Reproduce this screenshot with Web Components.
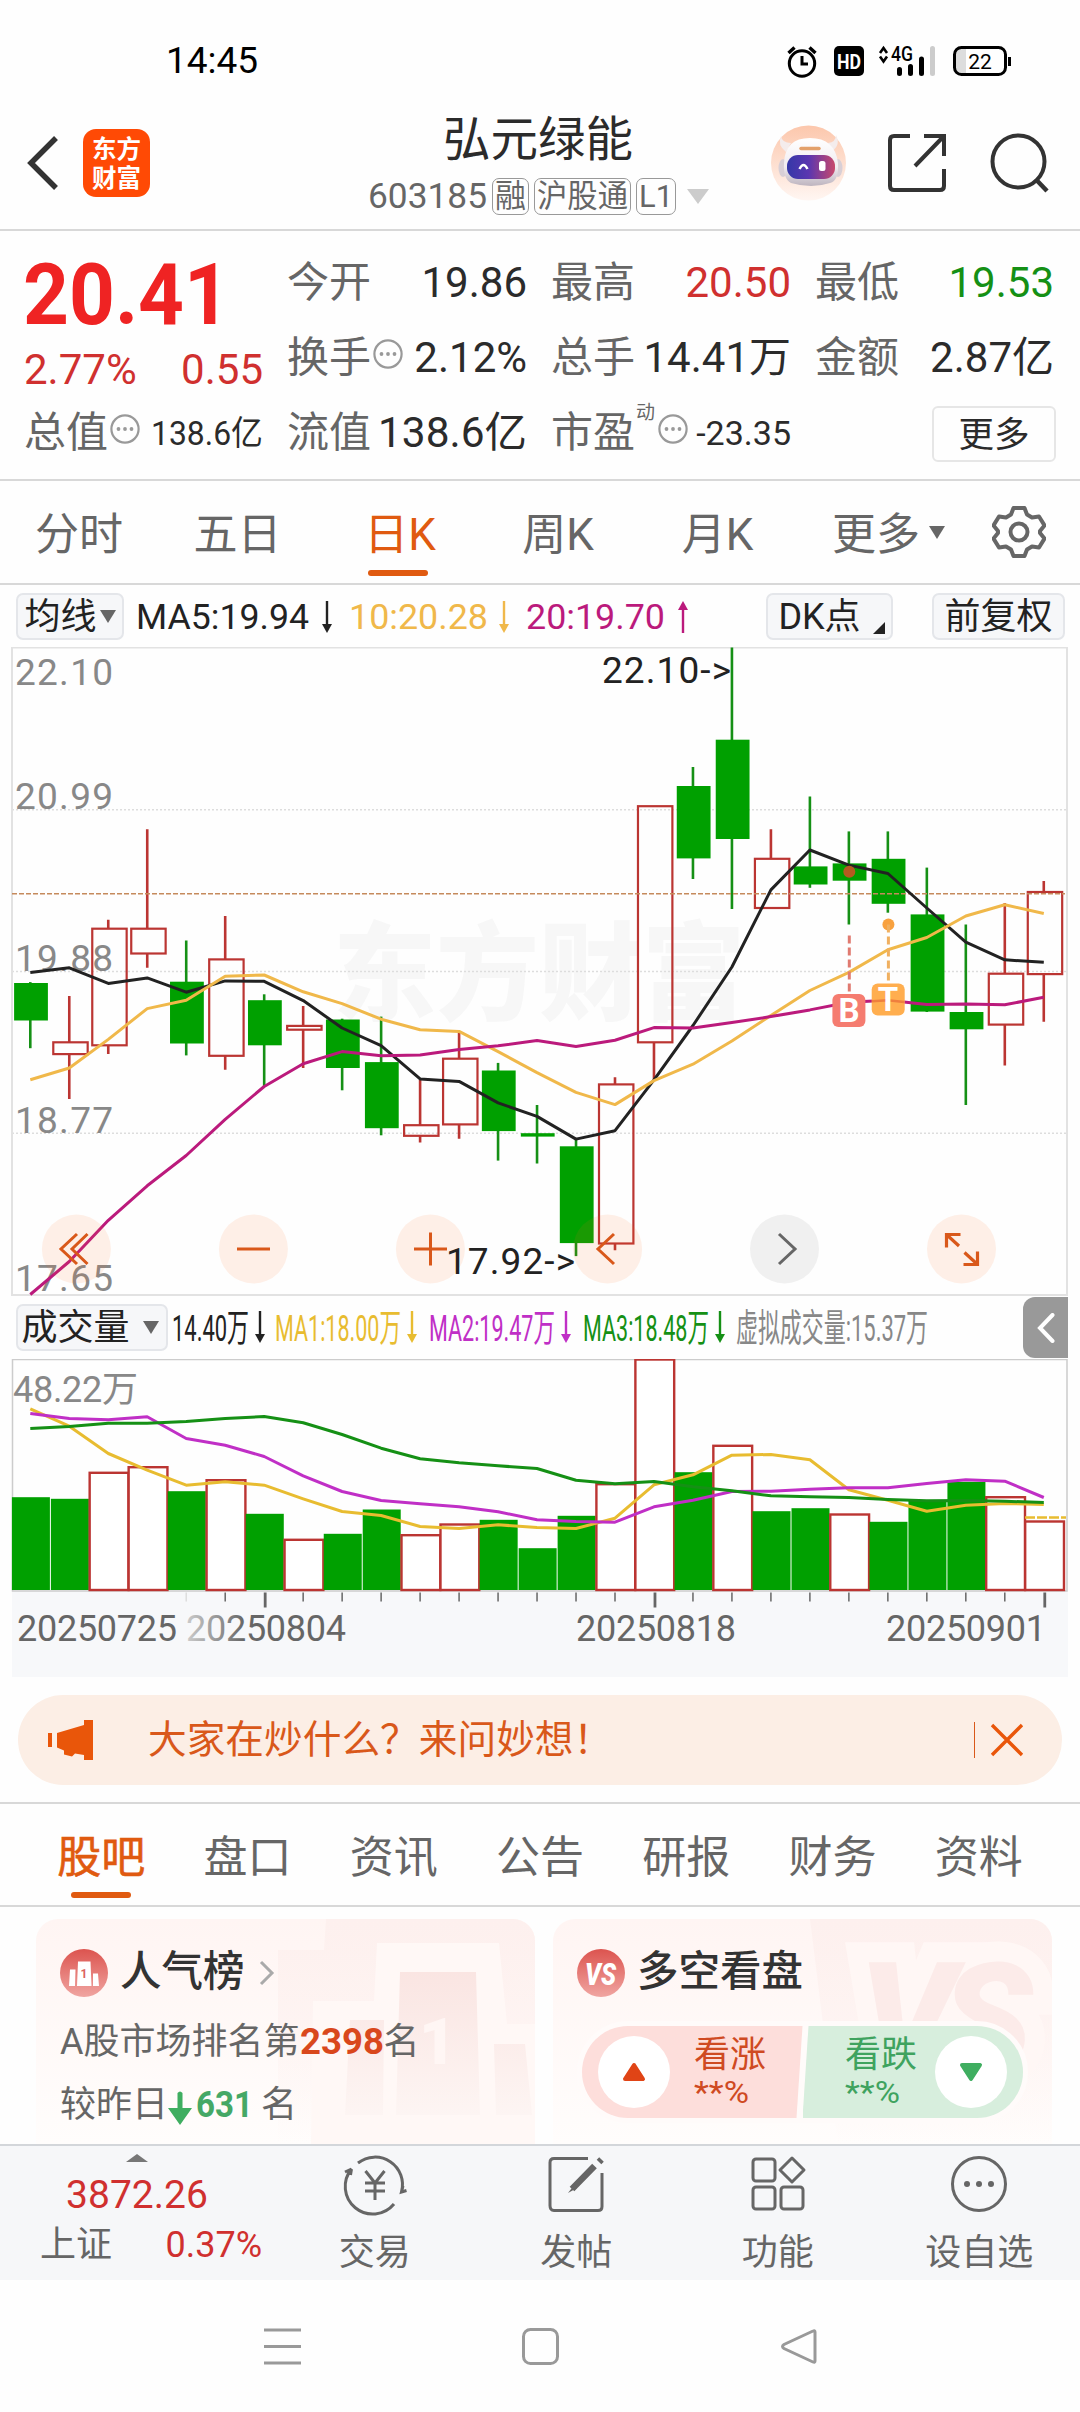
<!DOCTYPE html>
<html lang="zh-CN">
<head>
<meta charset="utf-8">
<title>弘元绿能 603185</title>
<style>
    body {
        margin: 0;
        width: 1080px;
        height: 2412px;
        overflow: hidden;
        background: #fefefe;
        color: #2b2b2b;
        font-family: Roboto, "Noto Sans CJK SC", sans-serif;
        --red: #d0302f;
        --green: #159015;
        --orange: #e05a10;
        --grey: #666;
        --line: #d8d8d8;
    }
</style>
</head>
<body>
<stock-page></stock-page>

<script>
// squeezes or stretches its text to the width given in "w"
class FitText extends HTMLElement {
    constructor() {
        super();
        this.attachShadow({mode: 'open'});
        this.shadowRoot.innerHTML = `
        <style>
            :host { display: inline-block; white-space: nowrap; flex: none; }
            span { display: inline-block; transform-origin: 0 50%; }
        </style>
        <span><slot></slot></span>`;
    }

    connectedCallback() {
        const w = Number(this.getAttribute('w'));
        const span = this.shadowRoot.querySelector('span');
        const natural = span.getBoundingClientRect().width;
        this.style.width = w + 'px';
        if (natural) span.style.transform = `scaleX(${w / natural})`;
    }
}
customElements.define('fit-text', FitText);

class TrendArrow extends HTMLElement {
    constructor() {
        super();
        this.attachShadow({mode: 'open'});
    }

    connectedCallback() {
        const up = this.hasAttribute('up');
        this.shadowRoot.innerHTML = `
        <style>
            :host { display: block; flex: none; width: 12px; height: 34px; }
            svg { display: block; ${up ? 'transform: rotate(180deg);' : ''} }
        </style>
        <svg width="12" height="34" viewBox="0 0 12 34">
            <path d="M6 1v28" stroke="currentColor" stroke-width="2.4"/>
            <path d="M1 24h10l-5 9z" fill="currentColor"/>
        </svg>`;
    }
}
customElements.define('trend-arrow', TrendArrow);

class StatusBar extends HTMLElement {
    constructor() {
        super();
        this.attachShadow({mode: 'open'});
    }

    connectedCallback() {
        this.shadowRoot.innerHTML = `
        <style>
            :host {
                display: flex;
                align-items: flex-start;
                height: 80px;
                padding: 0 68px 0 166px;
                box-sizing: border-box;
                color: #000;
            }
            .time { font-size: 37px; line-height: 40px; margin-top: 41px; flex: 1; }
            svg { display: block; margin-top: 42px; }
        </style>
        <div class="time">14:45</div>
        <svg width="226" height="38" viewBox="786 42 226 38">
            <g fill="none" stroke="#000" stroke-width="3">
                <circle cx="802" cy="63.500" r="12.700"/>
                <path d="M802 56v8h6"/>
                <path d="M788.500 53l6-5.500M815.500 53l-6-5.500" stroke-width="3.400"/>
            </g>
            <rect x="834" y="46" width="30" height="30" rx="5"/>
            <text x="849" y="68.500" font-size="21" font-weight="700" fill="#fff" text-anchor="middle" textLength="24" lengthAdjust="spacingAndGlyphs">HD</text>
            <path d="M880 53l3.500-5 3.500 5M880 56.500l3.500 5 3.500-5" fill="none" stroke="#000" stroke-width="2.600"/>
            <text x="891" y="61" font-size="20" font-weight="500" textLength="22" lengthAdjust="spacingAndGlyphs">4G</text>
            <path d="M899.500 69.500v4M910.500 66.500v7M921.500 59v14.500" stroke="#000" stroke-width="5" stroke-linecap="round"/>
            <path d="M932.500 48.500v25" stroke="#ccc" stroke-width="5" stroke-linecap="round"/>
            <rect x="956" y="49" width="10" height="25" fill="#ddd"/>
            <rect x="954.500" y="47.500" width="51" height="27" rx="7" fill="none" stroke="#000" stroke-width="3"/>
            <path d="M1009.500 57v9" stroke="#000" stroke-width="3"/>
            <text x="980" y="68.500" font-size="21" text-anchor="middle">22</text>
        </svg>`;
    }
}
customElements.define('status-bar', StatusBar);

class StockHeader extends HTMLElement {
    constructor() {
        super();
        this.attachShadow({mode: 'open'});
    }

    connectedCallback() {
        this.shadowRoot.innerHTML = `
        <style>
            :host {
                display: flex;
                align-items: center;
                height: 151px;
                box-sizing: border-box;
                padding: 16px 30px 0 27px;
                border-bottom: 2px solid var(--line);
            }
            svg { display: block; flex: none; }
            .logo {
                width: 67px;
                height: 68px;
                margin-left: 25px;
                border-radius: 13px;
                background: #ff4a05;
                color: #fff;
                font: 700 24.500px/29px "Noto Sans CJK SC", sans-serif;
                text-align: center;
                padding-top: 4px;
                box-sizing: border-box;
            }
            .name {
                display: flex;
                flex-direction: column;
                align-items: center;
                width: 344px;
                margin: 0 61px 0 216px;
            }
            .title { font-size: 47.500px; line-height: 60px; }
            .code {
                display: flex;
                align-items: center;
                gap: 5px;
                margin-top: 8px;
                font-size: 35px;
                line-height: 38px;
                color: var(--grey);
            }
            .tag {
                height: 37px;
                line-height: 36px;
                font-size: 31.500px;
                padding: 0 2px;
                border: 1.5px solid #999;
                border-radius: 7px;
                box-sizing: border-box;
                display: flex;
                align-items: center;
            }
        </style>
        <svg width="31" height="54" viewBox="0 0 31 54"><path d="M29 2L4 27l25 25" fill="none" stroke="#333" stroke-width="5.500"/></svg>
        <div class="logo">东方<br>财富</div>
        <div class="name">
            <div class="title">弘元绿能</div>
            <div class="code">
                <fit-text w="119">603185</fit-text>
                <span class="tag"><fit-text w="31">融</fit-text></span>
                <span class="tag"><fit-text w="91">沪股通</fit-text></span>
                <span class="tag"><fit-text w="34">L1</fit-text></span>
                <svg width="22" height="15" viewBox="0 0 22 15" style="margin-left:6px"><path d="M0 0h22L11 15z" fill="#ccc"/></svg>
            </div>
        </div>
        <svg width="75" height="76" viewBox="0 0 75 76">
            <defs>
                <linearGradient id="halo" x1="0" y1="0" x2="0" y2="1"><stop offset="0" stop-color="#fcc7ac"/><stop offset="1" stop-color="#fff6f2"/></linearGradient>
                <linearGradient id="visor"><stop offset="0" stop-color="#3538a8"/><stop offset=".45" stop-color="#5a36b0"/><stop offset="1" stop-color="#c8486c"/></linearGradient>
                <linearGradient id="shell" x1="0" y1="0" x2="0" y2="1"><stop offset="0" stop-color="#fff"/><stop offset=".6" stop-color="#f1ecf0"/><stop offset="1" stop-color="#bdb4bf"/></linearGradient>
            </defs>
            <circle cx="37.500" cy="38" r="37.500" fill="url(#halo)"/>
            <path d="M20 18q-9 0-10-7-4 9 5 16zM57 18q8-1 8-8 5 10-4 16z" fill="#f4ecec"/>
            <ellipse cx="12" cy="43" rx="4.500" ry="9" fill="#d8cfd6"/>
            <ellipse cx="67" cy="43" rx="4.500" ry="9" fill="#d8cfd6"/>
            <path d="M13 38Q14 13 39 13 64 13 67 38 68 56 59 58 50 61 40 61 30 61 20 58 12 54 13 38z" fill="url(#shell)"/>
            <rect x="16" y="30" width="48" height="24" rx="11" fill="url(#visor)"/>
            <path d="M30 23.500h18" stroke="#e3a06a" stroke-width="3.500" stroke-linecap="round"/>
            <path d="M28.500 44q4-8 8 0" fill="none" stroke="#fff" stroke-width="2.500"/>
            <rect x="48" y="36" width="6.500" height="10" rx="2.500" fill="#fff"/>
        </svg>
        <svg width="58" height="60" viewBox="0 0 58 60" style="margin-left:42px">
            <path d="M22 3H6q-4 0-4 4v46q0 4 4 4h46q4 0 4-4V36M36 3h20v20M56 3L27 33" fill="none" stroke="#333" stroke-width="4"/>
        </svg>
        <svg width="60" height="60" viewBox="0 0 60 60" style="margin-left:44px">
            <circle cx="28.500" cy="28.500" r="26" fill="none" stroke="#333" stroke-width="4"/>
            <path d="M45.500 46l11.500 12" stroke="#333" stroke-width="4.500"/>
        </svg>`;
    }
}
customElements.define('stock-header', StockHeader);

class QuoteItem extends HTMLElement {
    constructor() {
        super();
        this.attachShadow({mode: 'open'});
    }

    connectedCallback() {
        const info = this.hasAttribute('info') ? `
            <svg width="30" height="30" viewBox="0 0 30 30">
                <circle cx="15" cy="15" r="13.600" fill="none" stroke="#999" stroke-width="2.200"/>
                <g fill="#999"><circle cx="8.500" cy="15" r="1.900"/><circle cx="15" cy="15" r="1.900"/><circle cx="21.500" cy="15" r="1.900"/></g>
            </svg>` : '';
        const sup = this.hasAttribute('sup') ? `<sup>${this.getAttribute('sup')}</sup>` : '';
        this.shadowRoot.innerHTML = `
        <style>
            :host {
                display: flex;
                align-items: center;
                height: 75px;
                font-size: 42px;
                line-height: 60px;
                white-space: nowrap;
            }
            .label { color: var(--grey); }
            sup { font-size: 19px; line-height: 20px; color: var(--grey); margin: -39px 1px 0 1px; }
            svg { margin: -8px 0 0 2px; }
            .value { margin-left: auto; }
            :host([small]) .value { font-size: 34px; }
        </style>
        <span class="label">${this.getAttribute('label')}</span>${sup}${info}
        <span class="value"><slot></slot></span>`;
    }
}
customElements.define('quote-item', QuoteItem);

class QuotePanel extends HTMLElement {
    constructor() {
        super();
        this.attachShadow({mode: 'open'});
    }

    connectedCallback() {
        this.shadowRoot.innerHTML = `
        <style>
            :host {
                display: grid;
                grid-template-columns: 239px 240px 240px 239px;
                grid-template-rows: 75px 75px 75px;
                column-gap: 24px;
                height: 250px;
                box-sizing: border-box;
                padding: 14px 25px 0 24px;
                border-bottom: 2px solid var(--line);
            }
            .price { grid-row: span 2; color: var(--red); }
            .last { font-size: 86px; line-height: 75px; font-weight: 700; color: #ef2323; margin: 12px 0 0 -1px; }
            .change { display: flex; justify-content: space-between; font-size: 42px; line-height: 75px; }
            .more {
                justify-self: end;
                margin: 11px -2px 0 0;
                width: 124px;
                height: 56px;
                line-height: 54px;
                box-sizing: border-box;
                border: 2px solid #e6e6e6;
                border-radius: 6px;
                font-size: 35.500px;
                text-align: center;
            }
        </style>
        <div class="price">
            <div class="last"><fit-text w="207">20.41</fit-text></div>
            <div class="change"><span>2.77%</span><span>0.55</span></div>
        </div>
        <quote-item label="今开">19.86</quote-item>
        <quote-item label="最高"><span style="color:var(--red)">20.50</span></quote-item>
        <quote-item label="最低"><span style="color:var(--green)">19.53</span></quote-item>
        <quote-item label="换手" info>2.12%</quote-item>
        <quote-item label="总手">14.41万</quote-item>
        <quote-item label="金额">2.87亿</quote-item>
        <quote-item label="总值" info small><fit-text w="112">138.6亿</fit-text></quote-item>
        <quote-item label="流值"><fit-text w="149">138.6亿</fit-text></quote-item>
        <quote-item label="市盈" sup="动" info small>-23.35</quote-item>
        <div class="more">更多</div>`;
    }
}
customElements.define('quote-panel', QuotePanel);

class PeriodTabs extends HTMLElement {
    constructor() {
        super();
        this.attachShadow({mode: 'open'});
    }

    connectedCallback() {
        this.shadowRoot.innerHTML = `
        <style>
            :host {
                display: grid;
                grid-template-columns: 158px 159px 166px 150px 169px 156px 122px;
                height: 104px;
                box-sizing: border-box;
                border-bottom: 2px solid var(--line);
                font-size: 44px;
                line-height: 108px;
                color: var(--grey);
                text-align: center;
            }
            .on { color: var(--orange); display: flex; flex-direction: column; align-items: center; }
            .on::after { content: ""; width: 60px; height: 6px; border-radius: 3px; background: var(--orange); margin: -19px 4px 0 0; }
            .more { display: flex; align-items: center; justify-content: flex-end; gap: 9px; padding-right: 13px; }
            .gear { display: flex; align-items: center; justify-content: center; height: 102px; }
        </style>
        <span>分时</span><span>五日</span><span class="on">日K</span><span>周K</span><span>月K</span>
        <span class="more">更多<svg width="16" height="13" viewBox="0 0 16 13" style="margin-bottom:6px"><path d="M0 0h16L8 13z" fill="#666"/></svg></span>
        <span class="gear">
            <svg width="54" height="54" viewBox="-27 -27 54 54" fill="none" stroke="#666" stroke-width="4" stroke-linejoin="round">
                <path d="M-5.500-24h11l2.500 6.500 5 3 7-1 5.500 9-4.500 5.500v2l4.500 5.500-5.500 9-7-1-5 3-2.500 6.500h-11l-2.500-6.500-5-3-7 1-5.500-9 4.500-5.500v-2l-4.500-5.500 5.500-9 7 1 5-3z"/>
                <circle r="8.500"/>
            </svg>
        </span>`;
    }
}
customElements.define('period-tabs', PeriodTabs);

// grey rounded button used above both charts
class ChipButton extends HTMLElement {
    constructor() {
        super();
        this.attachShadow({mode: 'open'});
        this.shadowRoot.innerHTML = `
        <style>
            :host {
                display: flex;
                align-items: center;
                justify-content: center;
                flex: none;
                height: 47px;
                box-sizing: border-box;
                border: 2px solid #e4e6ea;
                border-radius: 7px;
                background: #f6f7f9;
                color: #222;
                font-size: 36px;
                line-height: 44px;
                white-space: nowrap;
            }
        </style>
        <slot></slot>`;
    }
}
customElements.define('chip-button', ChipButton);

class MaBar extends HTMLElement {
    constructor() {
        super();
        this.attachShadow({mode: 'open'});
    }

    connectedCallback() {
        this.shadowRoot.innerHTML = `
        <style>
            :host {
                display: flex;
                align-items: center;
                height: 62px;
                padding: 1px 15px 0 16px;
                box-sizing: border-box;
                font-size: 35.500px;
                line-height: 46px;
                color: #222;
            }
            fit-text { margin-top: 1px; }
            trend-arrow { margin-left: 12px; }
        </style>
        <chip-button style="width:108px">均线<svg width="16" height="13" viewBox="0 0 16 13" style="margin-left:3px"><path d="M0 0h16L8 13z" fill="#666"/></svg></chip-button>
        <fit-text w="173" style="margin-left:12px">MA5:19.94</fit-text><trend-arrow></trend-arrow>
        <fit-text w="139" style="color:#f0b84a;margin-left:16px">10:20.28</fit-text><trend-arrow style="color:#f0b84a;margin-left:10px"></trend-arrow>
        <fit-text w="139" style="color:#bb1a7c;margin-left:16px">20:19.70</fit-text><trend-arrow up style="color:#bb1a7c;margin-left:12px"></trend-arrow>
        <chip-button style="width:127px;margin-left:auto">DK点<svg width="12" height="12" viewBox="0 0 12 12" style="margin:22px -4px 0 12px"><path d="M12 0v12H0z" fill="#222"/></svg></chip-button>
        <chip-button style="width:133px;margin-left:39px">前复权</chip-button>`;
    }
}
customElements.define('ma-bar', MaBar);

const STEP = 38.98;
const centre = i => 30.3 + STEP * i;
const line = (ys, color) => `<polyline points="${ys.map((y, i) => centre(i).toFixed(1) + ',' + y).join(' ')}" fill="none" stroke="${color}" stroke-width="3" stroke-linejoin="round"/>`;

// [up, high, body top, body bottom, low]
const candles = [
    [0, 334.6, 335.5, 373, 400.7], [1, 348.5, 394.8, 406.6, 451.6], [1, 272.3, 281.2, 397.8, 406.6],
    [1, 181.8, 281.2, 306, 320.3], [0, 293, 334.2, 396, 407.9], [1, 268.5, 311.9, 408.3, 422.2],
    [0, 346.8, 352.7, 397.8, 439], [1, 358.6, 378.4, 382.2, 420.5], [0, 371.2, 372, 420.5, 442.8],
    [0, 369.1, 414.6, 480.7, 487.8], [1, 432.3, 477.7, 488.3, 495], [1, 385.5, 411.2, 476.9, 491.2],
    [0, 415.4, 423, 483.6, 513.1], [0, 457.5, 485.7, 489.1, 516], [0, 492, 498.8, 595.6, 608.6],
    [1, 429.7, 436.9, 596, 602.7], [1, 158.7, 158.7, 394.8, 432.3], [0, 119.5, 138.5, 210.9, 231.5],
    [0, 0, 92.2, 191.5, 261.4], [1, 181.8, 211.3, 260.5, 261.4], [0, 149, 218.9, 237, 240.3],
    [0, 183.9, 215.9, 233.2, 277], [0, 183.9, 211.3, 256.3, 265.2], [0, 220.1, 266.9, 364.1, 364.5],
    [0, 277, 364.5, 381.8, 457.5], [1, 255.5, 326.2, 377.1, 418], [1, 233.6, 244.5, 326.6, 374.2]
];
const ma5 = [324.9, 320.3, 335.9, 330.4, 344.7, 333.4, 333.8, 353.1, 380.5, 398.2, 431.4, 433.9, 455.4, 468.9, 491.6, 483.2, 432.3, 378, 319.5, 242.4, 202.5, 217.6, 226, 260.5, 294.6, 312.3, 314.8];
const ma10 = [432.3, 420.5, 391.9, 361.1, 352.7, 328.7, 327.5, 344.3, 356.1, 371.7, 382.2, 383.9, 404.1, 425.1, 444.9, 457.1, 433.1, 416.7, 393.5, 367.9, 343, 324.9, 302.2, 290, 268.5, 257.2, 266];
const ma20 = [647, 614, 572.8, 538.3, 508, 471.8, 439, 416.3, 404.1, 408.3, 407.4, 402, 398.2, 393.1, 399, 392.7, 380.1, 380.5, 375, 369.1, 362.4, 354.8, 352.7, 356.9, 356.5, 357.3, 349.8];

class KChart extends HTMLElement {
    constructor() {
        super();
        this.attachShadow({mode: 'open'});
    }

    candle([up, high, top, bottom, low], i) {
        const x = centre(i);
        if (!up) {
            return `<path d="M${x} ${high}V${low}" stroke="#159015" stroke-width="2.600"/>
                <rect x="${x - 16.2}" y="${top}" width="33.800" height="${bottom - top}" fill="#00a000"/>`;
        }
        return `<path d="M${x} ${high}V${top}M${x} ${bottom}V${low}" stroke="#bb3532" stroke-width="2.600"/>
            <rect x="${x - 16}" y="${top}" width="34.400" height="${bottom - top}" fill="none" stroke="#bb3532" stroke-width="2.200"/>`;
    }

    render() {
        const labels = [['22.10', 37.5], ['20.99', 161.5], ['19.88', 323.7], ['18.77', 485.7], ['17.65', 643]];
        const buttons = [76.4, 253.4, 430.4, 607.6, 784.5, 961.5];
        return `
        <svg width="1080" height="649" viewBox="0 -.500 1080 649">
            <text x="333" y="364" font-family="Noto Sans CJK SC" font-weight="900" font-size="107" fill="#f7f7f7" textLength="412" lengthAdjust="spacingAndGlyphs">东方财富</text>
            <path d="M12 162.200H1067M12 324H1067M12 485.800H1067" stroke="#ddd" stroke-width="1.500" stroke-dasharray="2 2"/>
            <path d="M12 0H1067V647.500H12z" fill="none" stroke="#e2e2e2" stroke-width="2"/>
            <g font-size="37" fill="#888">${labels.map(([t, y]) => `<text x="15" y="${y}" textLength="98">${t}</text>`).join('')}</g>
            ${candles.map((c, i) => this.candle(c, i)).join('')}
            <path d="M12 246.300H1065" stroke="#c58a5c" stroke-width="1.500" stroke-dasharray="5 2"/>
            ${line(ma5, '#222')}${line(ma10, '#f0b84a')}${line(ma20, '#bb1a7c')}

            <circle cx="849.300" cy="224.300" r="6" fill="#b55a20"/>
            <path d="M849.300 288v56" stroke="#e07a70" stroke-width="3" stroke-dasharray="8 4"/>
            <circle cx="888.400" cy="277" r="6" fill="#f8a13f"/>
            <path d="M888.400 277v58" stroke="#f0b060" stroke-width="3" stroke-dasharray="8 4"/>
            <rect x="832.400" y="346.400" width="33" height="33" rx="6" fill="#f57c70"/>
            <rect x="871.700" y="336" width="33" height="32" rx="6" fill="#ffae4f"/>
            <path d="M872 353.800L888 352.800 904 354.500" stroke="#ef7f3e" stroke-width="2.500" fill="none"/>
            <g font-size="33" font-weight="700" fill="#fff" text-anchor="middle"><text x="849" y="374.500">B</text><text x="888" y="363.500">T</text></g>

            <g fill="#ff7020" fill-opacity=".1">${buttons.map((x, i) => `<circle cx="${x}" cy="601.500" r="34.500" ${i === 4 ? 'fill="#777"' : ''}/>`).join('')}</g>
            <g fill="none" stroke="#d9581a" stroke-width="3">
                <path d="M77 586.500L61 601.500l16 15M87.500 586.500L72 601.500l15.500 15"/>
                <path d="M237 601.500h33M414 601.500h33M430.500 585v33"/>
                <path d="M614 586.500L598 601.500l16 15"/>
                <path d="M779 586.500L795 601.500l-16 15" stroke="#666"/>
                <path d="M946.500 600V587h14M947 587.500l12 11M977.500 604v13h-14M977 616.500l-12.500-11.500" stroke-width="3.200"/>
            </g>
            <g font-size="37" fill="#222">
                <text x="602" y="35.800" textLength="129">22.10-&gt;</text>
                <text x="446" y="626.700" textLength="129">17.92-&gt;</text>
            </g>
        </svg>`;
    }

    connectedCallback() {
        this.shadowRoot.innerHTML = `<style>:host, svg { display: block; }</style>${this.render()}`;
    }
}
customElements.define('k-chart', KChart);

class VolumeBar extends HTMLElement {
    constructor() {
        super();
        this.attachShadow({mode: 'open'});
    }

    connectedCallback() {
        this.shadowRoot.innerHTML = `
        <style>
            :host {
                display: flex;
                align-items: center;
                height: 63px;
                padding: 0 12px 0 16px;
                font-size: 37.500px;
                line-height: 46px;
                color: #222;
            }
            trend-arrow { margin: -1px 0 0 5px; }
            .fold {
                display: flex;
                align-items: center;
                justify-content: center;
                width: 45px;
                height: 61px;
                margin-left: auto;
                border-radius: 12px 0 0 12px;
                background: #999;
            }
        </style>
        <chip-button style="width:152px;padding-right:4px">成交量<svg width="16" height="13" viewBox="0 0 16 13" style="margin-left:13px"><path d="M0 0h16L8 13z" fill="#666"/></svg></chip-button>
        <fit-text w="77" style="margin-left:4px">14.40万</fit-text><trend-arrow></trend-arrow>
        <fit-text w="126" style="color:#e8bc30;margin-left:9px">MA1:18.00万</fit-text><trend-arrow style="color:#e8bc30"></trend-arrow>
        <fit-text w="126" style="color:#c02fc6;margin-left:11px">MA2:19.47万</fit-text><trend-arrow style="color:#c02fc6"></trend-arrow>
        <fit-text w="126" style="color:#159015;margin-left:11px">MA3:18.48万</fit-text><trend-arrow style="color:#159015"></trend-arrow>
        <fit-text w="192" style="color:#888;margin-left:10px">虚拟成交量:15.37万</fit-text>
        <div class="fold"><svg width="18" height="30" viewBox="0 0 18 30"><path d="M15.500 2L3 15l12.500 13" fill="none" stroke="#fff" stroke-width="4" stroke-linecap="round"/></svg></div>`;
    }
}
customElements.define('volume-bar', VolumeBar);

const volumes = [137.7, 139.3, 113.3, 107.7, 131.7, 120.7, 154.3, 180.3, 174.3, 150, 175.7, 165, 160.3, 188.7, 156.3, 124.7, 0, 112.7, 86.3, 151.7, 148.7, 155, 162.3, 141, 122.3, 137.7, 162];
// days whose volume bar is hollow red
const redDays = [2, 3, 5, 7, 10, 11, 15, 16, 18, 21, 25, 26];
const vma1 = [49.3, 66.7, 94, 110.7, 125.7, 122.3, 125.7, 139.3, 152, 156, 167, 169, 165.3, 168, 169, 158.7, 125.3, 115.3, 95.7, 95, 100.3, 130.3, 140.7, 151.7, 145.7, 144, 145];
const vma2 = [54, 59, 60.3, 57.3, 79, 85.7, 97, 116.3, 132, 141, 144.3, 147.3, 152.3, 160.3, 162, 162.7, 147.3, 140.7, 132, 131.7, 129.7, 128.3, 128.3, 124, 120.3, 121.7, 138];
const vma3 = [69, 67, 63.7, 63.7, 62, 59, 57, 63.3, 75, 88.7, 99.3, 103.3, 106.3, 109, 120.7, 124.3, 122, 127.3, 131.3, 136.3, 137.3, 138, 140, 141.3, 141, 141.7, 143];

class VolumeChart extends HTMLElement {
    constructor() {
        super();
        this.attachShadow({mode: 'open'});
    }

    bar(top, i) {
        const x = centre(i);
        if (!redDays.includes(i)) {
            return `<rect x="${x - 18.4}" y="${top}" width="38" height="${230.5 - top}" fill="#00a000"/>`;
        }
        return `<rect x="${x - 18.6}" y="${top}" width="38.800" height="${230.5 - top}" fill="#fff" stroke="#bb3532" stroke-width="2.400"/>`;
    }

    connectedCallback() {
        const ticks = candles.map((c, i) => {
            if (i < 4) return '';
            const major = i % 10 === 6;
            return `<path d="M${centre(i) + (major ? 1 : 0)} 233v${major ? 15 : 9}" stroke="${i === 4 ? '#ddd' : '#666'}" stroke-width="${major ? 2.8 : 1.5}"/>`;
        });
        this.shadowRoot.innerHTML = `
        <style>:host, svg { display: block; }</style>
        <svg width="1080" height="318" viewBox="0 -.500 1080 318">
            <defs><linearGradient id="fade" gradientUnits="userSpaceOnUse" x1="186" y1="0" x2="245" y2="0"><stop offset="0" stop-color="#ccc"/><stop offset="1" stop-color="#666"/></linearGradient></defs>
            <rect x="12" y="232" width="1056" height="85.500" fill="#f7f8fa"/>
            <path d="M12.500 0H1067V231.500H12.500z" fill="#fefefe" stroke="#ccc" stroke-width="1.500"/>
            ${volumes.map((v, i) => this.bar(v, i)).join('')}
            <path d="M1025 158H1066" stroke="#e8bc30" stroke-width="2.600" stroke-dasharray="10 2"/>
            ${line(vma1, '#e8bc30')}${line(vma2, '#c02fc6')}${line(vma3, '#159015')}
            <text x="13" y="42" font-size="36" fill="#888" textLength="125">48.22万</text>
            ${ticks.join('')}
            <g font-size="36" fill="#666">
                <text x="17" y="281" textLength="160">20250725</text>
                <text x="186" y="281" textLength="160" fill="url(#fade)">20250804</text>
                <text x="576" y="281" textLength="160">20250818</text>
                <text x="886" y="281" textLength="160">20250901</text>
            </g>
        </svg>`;
    }
}
customElements.define('volume-chart', VolumeChart);

class AskBanner extends HTMLElement {
    constructor() {
        super();
        this.attachShadow({mode: 'open'});
    }

    connectedCallback() {
        this.shadowRoot.innerHTML = `
        <style>
            :host {
                display: flex;
                align-items: center;
                height: 90px;
                margin: 18px 18px 17px;
                padding: 0 38px 0 30px;
                border-radius: 45px;
                background: #fceee5;
                color: #d9581a;
                font-size: 38.700px;
                line-height: 90px;
            }
            span { margin-left: 54px; flex: 1; }
            i { width: 1.5px; height: 36px; background: #d9581a; margin-right: 15px; }
            svg { display: block; }
        </style>
        <svg width="46" height="40" viewBox="0 0 46 40"><path d="M0 13h4v14H0zM9 13L36 5V0h9v40h-9v-5l-9-1.500-3 3-8-2v-4l-7-3z" fill="#e9560a"/></svg>
        <span>大家在炒什么？来问妙想！</span>
        <i></i>
        <svg width="34" height="34" viewBox="0 0 34 34"><path d="M2 2l30 30M32 2L2 32" stroke="#e9560a" stroke-width="3.400"/></svg>`;
    }
}
customElements.define('ask-banner', AskBanner);

class SectionTabs extends HTMLElement {
    constructor() {
        super();
        this.attachShadow({mode: 'open'});
    }

    connectedCallback() {
        const tabs = ['股吧', '盘口', '资讯', '公告', '研报', '财务', '资料'];
        this.shadowRoot.innerHTML = `
        <style>
            :host {
                display: grid;
                grid-template-columns: repeat(7, 1fr);
                height: 105px;
                box-sizing: border-box;
                padding: 0 28px;
                border-top: 2px solid var(--line);
                border-bottom: 2px solid var(--line);
                font-size: 44px;
                line-height: 109px;
                color: var(--grey);
                text-align: center;
            }
            .on { color: var(--orange); -webkit-text-stroke: .6px var(--orange); display: flex; flex-direction: column; align-items: center; }
            .on::after { content: ""; width: 60px; height: 6px; border-radius: 3px; background: var(--orange); margin-top: -21px; }
        </style>
        ${tabs.map((t, i) => `<span class="${i ? '' : 'on'}">${t}</span>`).join('')}`;
    }
}
customElements.define('section-tabs', SectionTabs);

// card shell: artwork slot behind, title row on top
class InfoCard extends HTMLElement {
    constructor() {
        super();
        this.attachShadow({mode: 'open'});
        this.shadowRoot.innerHTML = `
        <style>
            :host {
                display: block;
                position: relative;
                width: 499px;
                height: 225px;
                box-sizing: border-box;
                padding: 24px 24px 0;
                border-radius: 22px 22px 0 0;
                overflow: hidden;
                background: linear-gradient(#fff5f3, #fffdfc);
            }
            ::slotted([slot=art]) { position: absolute; left: 0; top: 0; }
            .head { position: relative; display: flex; align-items: center; height: 60px; line-height: 56px; font-size: 41.500px; font-weight: 500; color: #333; }
            ::slotted([slot=icon]) { margin-right: 12px; }
            ::slotted(span) { margin-top: -3px; }
            .body { position: relative; }
        </style>
        <slot name="art"></slot>
        <div class="head"><slot name="icon"></slot><slot name="title"></slot></div>
        <div class="body"><slot></slot></div>`;
    }
}
customElements.define('info-card', InfoCard);

class RankCard extends HTMLElement {
    constructor() {
        super();
        this.attachShadow({mode: 'open'});
    }

    connectedCallback() {
        this.shadowRoot.innerHTML = `
        <style>
            :host { display: block; }
            p { display: flex; align-items: center; margin: 0; font-size: 36px; line-height: 63px; color: var(--grey); white-space: nowrap; }
            b { font-weight: 700; color: #d9481c; }
            svg { display: block; }
        </style>
        <info-card>
            <svg slot="art" width="499" height="226" viewBox="0 0 499 226">
                <defs>
                    <linearGradient id="a" x1="0" y1="0" x2="0" y2="1"><stop offset="0" stop-color="#fdf0ee"/><stop offset="1" stop-color="#fdf0ee" stop-opacity="0"/></linearGradient>
                    <linearGradient id="b" x1="0" y1="0" x2="0" y2="1"><stop offset="0" stop-color="#fae5e2"/><stop offset="1" stop-color="#fdf5f3"/></linearGradient>
                </defs>
                <path d="M290 0L288 31H242V226H499V0z" fill="url(#a)"/>
                <path d="M341 24H463L471 105H499V226H275L277 82H338z" fill="#fff8f6"/>
                <path d="M364 53H440L444 196H360zM314 101H348L347 196H309zM458 125H489L496 196H460z" fill="url(#b)"/>
                <text x="383" y="145" font-size="64" font-weight="900" fill="#fff6f4">1</text>
            </svg>
            <svg slot="icon" width="48" height="48" viewBox="0 0 48 48">
                <defs><linearGradient id="c" x1="0" y1="0" x2="0" y2="1"><stop offset="0" stop-color="#dc544f"/><stop offset="1" stop-color="#f0a5a1"/></linearGradient></defs>
                <circle cx="24" cy="24" r="24" fill="url(#c)"/>
                <path d="M18 12.500H30.500L31.500 37H17zM10 20.500H15.500L15 37H9zM33 24.500H38L39 37H33z" fill="#fff"/>
                <text x="24" y="29" font-size="12" font-weight="700" text-anchor="middle" fill="#dc625d">1</text>
            </svg>
            <span slot="title">人气榜</span>
            <svg slot="title" width="16" height="26" viewBox="0 0 16 26" style="margin-left:14px"><path d="M2 2l11 11L2 24" fill="none" stroke="#aaa" stroke-width="3"/></svg>
            <p style="margin-top:8px">A股市场排名第<fit-text w="84"><b>2398</b></fit-text>名</p>
            <p>较昨日<svg width="24" height="34" viewBox="0 0 24 34" style="margin:4px 4px 0 0"><path d="M9.500 2q2.500-3 5 0v15H24L12 34 0 17h9.500z" fill="#3fae60"/></svg><fit-text w="57"><b style="color:#45a866">631</b></fit-text><span style="margin-left:8px">名</span></p>
        </info-card>`;
    }
}
customElements.define('rank-card', RankCard);

class VoteCard extends HTMLElement {
    constructor() {
        super();
        this.attachShadow({mode: 'open'});
    }

    connectedCallback() {
        this.shadowRoot.innerHTML = `
        <style>
            :host { display: block; }
            svg { display: block; }
            .vote {
                display: flex;
                width: 441px;
                height: 92px;
                margin-top: 18px;
                border: 5px solid #fffbfa;
                border-radius: 51px;
                background: #fffbfa;
                overflow: hidden;
            }
            .side { display: flex; align-items: center; gap: 24px; flex: 1; font-size: 36px; line-height: 42px; }
            .up { background: #fddedb; color: #cf4a22; padding-left: 16px; clip-path: polygon(0 0, 100% 0, calc(100% - 6px) 100%, 0 100%); }
            .down { background: #d7eedd; color: #3fa35f; flex-direction: row-reverse; gap: 18px; padding-right: 16px; clip-path: polygon(6px 0, 100% 0, 100% 100%, 0 100%); }
            .disc { display: flex; align-items: center; justify-content: center; width: 72px; height: 72px; border-radius: 50%; background: #fff; }
            .pct { font-size: 31px; line-height: 34px; }
        </style>
        <info-card>
            <svg slot="art" width="499" height="226" viewBox="0 0 499 226">
                <defs>
                    <linearGradient id="d" x1="0" y1="0" x2="0" y2="1"><stop offset="0" stop-color="#fdf0ee"/><stop offset="1" stop-color="#fdf0ee" stop-opacity="0"/></linearGradient>
                </defs>
                <path d="M257 0L285 226H499V0z" fill="url(#d)"/>
                <text x="306" y="150" font-size="150" font-weight="900" font-style="italic" letter-spacing="-14" fill="#fcebe9" stroke="#fff7f5" stroke-width="40" paint-order="stroke">VS</text>
            </svg>
            <svg slot="icon" width="48" height="48" viewBox="0 0 48 48">
                <defs><linearGradient id="e" x1="0" y1="0" x2="0" y2="1"><stop offset="0" stop-color="#dc544f"/><stop offset="1" stop-color="#f0a5a1"/></linearGradient></defs>
                <circle cx="24" cy="24" r="24" fill="url(#e)"/>
                <text x="23.500" y="36" font-size="32" font-weight="900" font-style="italic" text-anchor="middle" fill="#fff" textLength="31" lengthAdjust="spacingAndGlyphs">VS</text>
            </svg>
            <span slot="title">多空看盘</span>
            <div class="vote">
                <div class="side up">
                    <span class="disc"><svg width="24" height="20" viewBox="0 0 24 20"><path d="M12 3l9 14H3z" fill="#e04416" stroke="#e04416" stroke-width="4" stroke-linejoin="round"/></svg></span>
                    <span>看涨<div class="pct"><fit-text w="55">**%</fit-text></div></span>
                </div>
                <div class="side down">
                    <span class="disc"><svg width="24" height="20" viewBox="0 0 24 20"><path d="M12 17l9-14H3z" fill="#3fae60" stroke="#3fae60" stroke-width="4" stroke-linejoin="round"/></svg></span>
                    <span>看跌<div class="pct"><fit-text w="55">**%</fit-text></div></span>
                </div>
            </div>
        </info-card>`;
    }
}
customElements.define('vote-card', VoteCard);

class BottomBar extends HTMLElement {
    constructor() {
        super();
        this.attachShadow({mode: 'open'});
    }

    connectedCallback() {
        const items = [
            ['交易', `<path d="M13 9A27.500 27.500 0 0 1 56.500 38l5-1.500M49 50A27.500 27.500 0 0 1 6.500 15L0 18M6.500 15l-1 6M56.500 38l1.500-6"/><path d="M20.500 17l9.500 12 9.500-12M20 29h20M20 37h20M30 29v17" stroke-width="3"/>`],
            ['发帖', `<path d="M42 4.500H8q-4 0-4 4v43q0 5 4 5h44q4 0 4-4V19"/><path d="M55.500 5.500l-2.500 2.500M48.500 12L26 35" stroke-width="6.500"/><path d="M29 30l-7 9 9-5z" fill="#666" stroke="none"/>`],
            ['功能', `<rect x="5" y="5" width="22" height="22" rx="3"/><rect x="5" y="33" width="22" height="22" rx="3"/><rect x="33" y="33" width="22" height="22" rx="3"/><path d="M44 4l12 12-12 12-12-12z" stroke-linejoin="round"/>`],
            ['设自选', `<circle cx="30" cy="30" r="26.500"/><g fill="#666" stroke="none"><circle cx="18" cy="30" r="3"/><circle cx="30" cy="30" r="3"/><circle cx="42" cy="30" r="3"/></g>`]
        ];
        this.shadowRoot.innerHTML = `
        <style>
            :host {
                display: grid;
                grid-template-columns: 274px repeat(4, 1fr);
                height: 136px;
                box-sizing: border-box;
                border-top: 2px solid #d3d6da;
                background: #f6f7f9;
                font-size: 36px;
                color: var(--grey);
            }
            .item { display: flex; flex-direction: column; align-items: center; padding-top: 8px; line-height: 48px; }
            .item svg { display: block; margin-bottom: 15px; overflow: visible; }
            .index { display: flex; flex-direction: column; align-items: center; padding-top: 8px; color: var(--red); }
            .num { font-size: 39px; line-height: 44px; margin-top: 11px; }
            .row { display: flex; justify-content: space-between; width: 222px; line-height: 44px; margin-top: 6px; margin-left: 28px; }
            .row span { color: var(--grey); }
        </style>
        <div class="index">
            <svg width="22" height="8" viewBox="0 0 22 8"><path d="M11 0l11 8H0z" fill="#777"/></svg>
            <div class="num">3872.26</div>
            <div class="row"><span>上证</span>0.37%</div>
        </div>
        ${items.map(([t, p]) => `<div class="item"><svg width="60" height="60" viewBox="0 0 60 60" fill="none" stroke="#666" stroke-width="3">${p}</svg>${t}</div>`).join('')}`;
    }
}
customElements.define('bottom-bar', BottomBar);

class NavKeys extends HTMLElement {
    constructor() {
        super();
        this.attachShadow({mode: 'open'});
        this.shadowRoot.innerHTML = `
        <style>
            :host { display: flex; align-items: center; justify-content: center; gap: 221px; height: 132px; }
            svg { display: block; fill: none; stroke: #999; stroke-width: 3; }
        </style>
        <svg width="37" height="37" viewBox="0 0 37 37"><path d="M0 2h37M0 18.500h37M0 35h37"/></svg>
        <svg width="37" height="37" viewBox="0 0 37 37"><rect x="1.500" y="1.500" width="34" height="34" rx="7"/></svg>
        <svg width="37" height="37" viewBox="0 0 37 37"><path d="M33 3Q35 2 35 4V33Q35 35 33 34L4 20.500Q1 18.500 4 16.500z"/></svg>`;
    }
}
customElements.define('nav-keys', NavKeys);

class StockPage extends HTMLElement {
    constructor() {
        super();
        this.attachShadow({mode: 'open'});
    }

    connectedCallback() {
        this.shadowRoot.innerHTML = `
        <style>
            :host { display: block; }
            .cards { display: flex; gap: 18px; height: 237px; padding: 12px 0 0 36px; box-sizing: border-box; overflow: hidden; }
        </style>
        <status-bar></status-bar>
        <stock-header></stock-header>
        <quote-panel></quote-panel>
        <period-tabs></period-tabs>
        <ma-bar></ma-bar>
        <k-chart></k-chart>
        <volume-bar></volume-bar>
        <volume-chart></volume-chart>
        <ask-banner></ask-banner>
        <section-tabs></section-tabs>
        <div class="cards"><rank-card></rank-card><vote-card></vote-card></div>
        <bottom-bar></bottom-bar>
        <nav-keys></nav-keys>`;
    }
}
customElements.define('stock-page', StockPage);
</script>
</body>
</html>
